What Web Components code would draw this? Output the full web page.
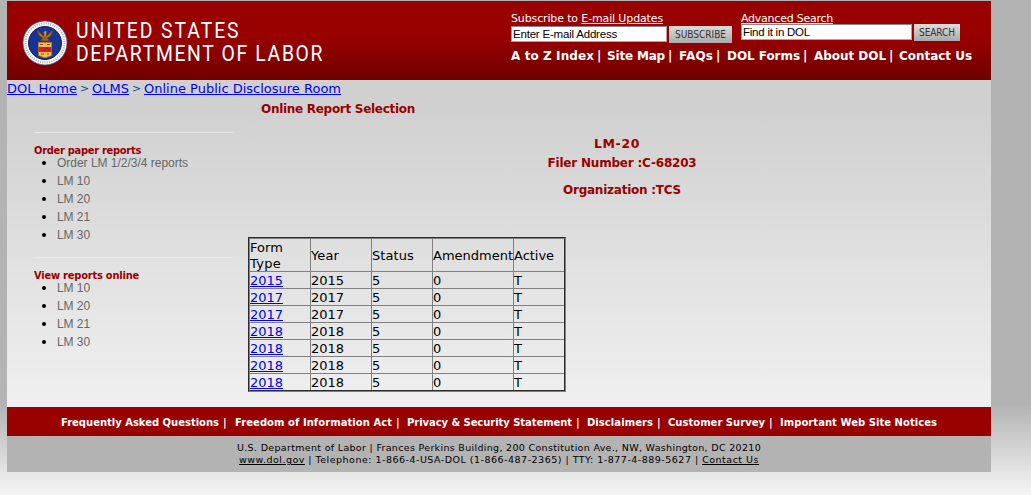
<!DOCTYPE html>
<html lang="en"><head><meta charset="utf-8"><title>Online Report Selection</title>
<style>html{height:100%}body{margin:0;min-height:495px;background:linear-gradient(#b3b3b3 405px,#f5f5f5 495px);font-family:"DejaVu Sans",sans-serif;overflow:hidden}</style>
</head><body><dol-page></dol-page>
<script>
const define=(name,html,after)=>customElements.define(name,class extends HTMLElement{
  connectedCallback(){
    if(this.shadowRoot)return;
    this.attachShadow({mode:'open'}).innerHTML=html;
    if(after)after.call(this,this.shadowRoot);
  }
});

// A single line of text tracked to occupy exactly the width in its "w" attribute.
define('fit-text','<style>:host{display:inline-block;white-space:nowrap;flex:none}</style><slot></slot>',function(){
  const w=+this.getAttribute('w'), s=this.style;
  s.letterSpacing='0px'; s.display='inline-block'; s.width='max-content';
  const n=this.textContent.length, natural=parseFloat(getComputedStyle(this).width);
  s.display='';
  s.letterSpacing=((w-natural)/n)+'px';
  s.width=w+'px';
});

define('dol-seal',`<style>:host{display:block;width:46px;height:46px}svg{display:block}</style>
<svg width="46" height="46" viewBox="0 0 46 46">
<circle cx="23" cy="23" r="22" fill="#f8f8f8" stroke="#50598c" stroke-width=".7"/>
<circle cx="23" cy="23" r="19.500" fill="none" stroke="#a3adc4" stroke-width="2" stroke-dasharray="1 1.3"/>
<circle cx="23" cy="23" r="16.500" fill="#173394" stroke="#1a2453" stroke-width="1"/>
<path d="M15.500 10c0 4 2 7 5 8l-2 3h9l-2-3c3-1 5-4 5-8l-4 4-2 2-1-4-2 4-2-2z" fill="#9a661f" stroke="#5d3d21" stroke-width=".7"/>
<path d="M22 12l2-1v3l-1 2zM18 14l3 3M28 14l-3 3" fill="#d6a14d" stroke="#c98c3c" stroke-width=".7"/>
<path d="M16.500 22.500h13v13l-5.500 2h-2l-5.500-2z" fill="#f0bd50" stroke="#ba812d" stroke-width=".8"/>
<path d="M16.500 27h13v5h-13z" fill="#d71e20"/>
<path d="M18 24.500h3M25 24.500h3M20 28.500l2 2 3-3 2 3M19 34h3M25 34h2" fill="none" stroke="#783024" stroke-width=".8"/>
</svg>`);

define('dol-field',`<style>:host{display:flex;gap:2px;height:17px;align-items:flex-start}
.i{box-sizing:border-box;height:16px;border:1px solid #a8a8a8;border-top-color:#888;border-left-color:#999;background:#fff;color:#000;font:11.5px/15px "Liberation Sans",sans-serif;padding-left:1px}
.b{box-sizing:border-box;height:17px;background:linear-gradient(#ddd,#aaa);color:#333;font:10px/17px "DejaVu Sans Condensed","DejaVu Sans",sans-serif;text-align:center}</style>
<div class="i"></div><div class="b"></div>`,function(r){
  const g=a=>this.getAttribute(a), [i,b]=[r.querySelector('.i'),r.querySelector('.b')];
  i.style.width=g('iw')+'px'; b.style.width=g('bw')+'px';
  i.innerHTML='<fit-text w="'+g('tw')+'">'+g('text')+'</fit-text>';
  b.innerHTML='<fit-text w="'+g('lw')+'">'+g('label')+'</fit-text>';
});

// Row of links separated by bars; each entry of "items" is label:width:gap.
define('bar-nav',`<style>:host{display:flex}i{font-style:normal;box-sizing:border-box}fit-text{display:block}</style>`,function(r){
  const list=this.getAttribute('items').split(';').map(t=>t.split(':'));
  r.innerHTML+=list.map(([t,w,gap])=>'<fit-text w="'+w+'">'+t+'</fit-text>'+(gap?'<i style="width:'+gap+'px;padding-left:'+(this.getAttribute('pad'))+'px">|</i>':'')).join('');
});

define('dol-header',`<style>
:host{display:flex;box-sizing:border-box;height:79px;background:linear-gradient(#900 0,#900 36px,#700000 100%);color:#fff;padding-left:15px}
.brand{width:489px;display:flex;gap:8px;padding-top:19px;box-sizing:border-box}
.name{font:22px/23px Roboto,sans-serif;width:281px;margin-top:-1px;transform:scaleX(.88);transform-origin:0 0}
.name fit-text{display:block}
.forms{display:flex;gap:9px;height:43px;box-sizing:border-box;padding-top:10px;font:11px/15px "DejaVu Sans",sans-serif}
.forms fit-text{display:block;height:15px}.adv fit-text{height:13px}
a{color:inherit;text-decoration:underline;text-underline-offset:1px}
bar-nav{font:bold 12px/16px "DejaVu Sans",sans-serif;padding-top:4px}</style>
<div class="brand"><dol-seal></dol-seal><div class="name"><fit-text w="187">UNITED STATES</fit-text><fit-text w="282">DEPARTMENT OF LABOR</fit-text></div></div>
<div><div class="forms"><div><fit-text w="152">Subscribe to <a>E-mail Updates</a></fit-text><dol-field iw="156" bw="63" text="Enter E-mail Address" tw="104" label="SUBSCRIBE" lw="51"></dol-field></div>
<div class="adv"><fit-text w="92"><a>Advanced Search</a></fit-text><dol-field iw="171" bw="46" text="Find it in DOL" tw="67" label="SEARCH" lw="36"></dol-field></div></div>
<bar-nav pad="3" items="A to Z Index:83:13;Site Map:58:14;FAQs:34:14;DOL Forms:73:14;About DOL:72:13;Contact Us:73"></bar-nav></div>`);

define('report-list',`<style>:host{display:block;border-top:1px solid #e8e8e8;width:199px;box-sizing:border-box}
.h{height:12px;margin-top:11px;font:bold 11px/13px "DejaVu Sans Condensed","DejaVu Sans",sans-serif;color:#900}
.h fit-text{display:block}ul{list-style:none;margin:-2px 0 0;padding:0 0 0 8px}
li{display:flex;align-items:center;height:18px;font:12px/18px "Liberation Sans",sans-serif;color:#666}
li::before{content:"";width:4px;height:4px;border-radius:50%;background:#000;margin-right:11px}</style>
<div class="h"></div><ul></ul>`,function(r){
  r.querySelector('.h').innerHTML='<fit-text w="'+this.getAttribute('w')+'">'+this.getAttribute('heading')+'</fit-text>';
  r.querySelector('ul').innerHTML=this.getAttribute('items').split(',').map(t=>'<li><fit-text w="'+(t.length>6?131:33)+'">'+t+'</fit-text></li>').join('');
});

define('report-table',`<style>:host{display:block}
table{border:2px groove gray;border-spacing:0;table-layout:fixed;width:318px;font:13px/18px "DejaVu Sans",sans-serif;box-sizing:border-box}
td{padding:0;height:16px;border-right:1px solid gray;border-bottom:1px solid gray;vertical-align:middle;white-space:nowrap}
td:last-child{border-right:0}tr:last-child td{border-bottom:0}
tr:first-child td{height:32px}fit-text{display:block;height:16px}a{color:#00e;text-decoration:underline}</style>
<table><colgroup><col style="width:61px"><col style="width:61px"><col style="width:61px"><col style="width:81px"><col style="width:50px"></colgroup><tbody></tbody></table>`,function(r){
  const cell=(t,w)=>'<td><fit-text w="'+w+'">'+t+'</fit-text></td>';
  r.querySelector('tbody').innerHTML='<tr><td><fit-text w="33">Form</fit-text><fit-text w="31">Type</fit-text></td>'+cell('Year',28)+cell('Status',42)+cell('Amendment',80)+cell('Active',40)+'</tr>'
   +[2015,2017,2017,2018,2018,2018,2018].map(y=>'<tr>'+cell('<a>'+y+'</a>',33)+cell(y,33)+cell(5,8)+cell(0,8)+cell('T',8)+'</tr>').join('');
});

define('dol-main',`<style>
:host{display:block;height:327px;box-sizing:border-box;background:linear-gradient(#d0d0d0 8%,#efefef 97%)}
.crumb{height:16px;display:flex;gap:4px;font:13px/17px "DejaVu Sans",sans-serif;color:#0b4b88}.crumb a{color:#00e;text-decoration:underline}
.gt{font-size:11px;text-indent:-1px}
.cols{display:grid;grid-template-columns:241px 1fr;height:311px}
aside{padding:36px 0 0 27px}aside report-list+report-list{margin-top:13px}
section{color:#900;font:bold 12px/18px "DejaVu Sans",sans-serif}
.t{padding:4px 0 0 13px;height:36px;box-sizing:border-box}
.c{width:748px;height:105px;display:flex;flex-direction:column;align-items:center}
.lm{font-size:12.5px;margin:3px 0 1px -10px}
.org{margin-top:9px}report-table{color:#000;font-weight:normal}</style>
<div class="crumb"><fit-text w="70"><a>DOL Home</a></fit-text><fit-text class="gt" w="7">&gt;</fit-text><fit-text w="37"><a>OLMS</a></fit-text><fit-text class="gt" w="7">&gt;</fit-text><fit-text w="197"><a>Online Public Disclosure Room</a></fit-text></div>
<div class="cols"><aside>
<report-list heading="Order paper reports" w="107" items="Order LM 1/2/3/4 reports,LM 10,LM 20,LM 21,LM 30"></report-list>
<report-list heading="View reports online" w="105" items="LM 10,LM 20,LM 21,LM 30"></report-list></aside>
<section><div class="t"><fit-text w="154">Online Report Selection</fit-text></div>
<div class="c"><fit-text class="lm" w="46">LM-20</fit-text><fit-text w="149">Filer Number :C-68203</fit-text><fit-text class="org" w="118">Organization :TCS</fit-text></div>
<report-table></report-table></section></div>`);

define('dol-footer',`<style>:host{display:block}
bar-nav{height:29px;box-sizing:border-box;background:#900;color:#fff;padding:9px 0 0 54px;font:bold 10px/14px "DejaVu Sans",sans-serif}
.addr{height:36px;box-sizing:border-box;background:#b3b3b3;color:#000;padding-top:6px;font:9.5px/12px "DejaVu Sans",sans-serif;display:flex;flex-direction:column;padding-left:230px}
a{text-decoration:underline}.two{margin-left:2px}</style>
<bar-nav pad="4" items="Frequently Asked Questions:158:16;Freedom of Information Act:157:15;Privacy &amp; Security Statement:165:15;Disclaimers:66:15;Customer Survey:97:15;Important Web Site Notices:157"></bar-nav>
<div class="addr"><fit-text w="524">U.S. Department of Labor | Frances Perkins Building, 200 Constitution Ave., NW, Washington, DC 20210</fit-text><fit-text class="two" w="520"><a>www.dol.gov</a> | Telephone: 1-866-4-USA-DOL (1-866-487-2365) | TTY: 1-877-4-889-5627 | <a>Contact Us</a></fit-text></div>`);

define('dol-page','<style>:host{display:block;width:984px;padding:1px 0 0 7px}</style><dol-header></dol-header><dol-main></dol-main><dol-footer></dol-footer>');
</script></body></html>
